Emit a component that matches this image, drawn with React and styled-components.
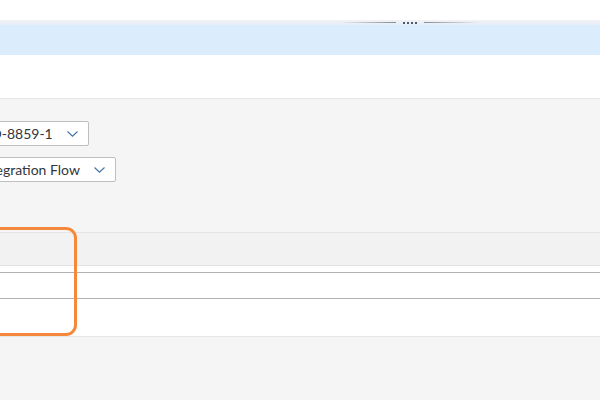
import styled, { createGlobalStyle } from 'styled-components';

const GlobalStyle = createGlobalStyle`
  html, body {
    margin: 0;
    padding: 0;
    width: 600px;
    height: 400px;
    overflow: hidden;
    background: #f7f7f7;
    font-family: Lato, 'Open Sans', sans-serif;
    color: #32363a;
  }
`;

const Page = styled.div`
  width: 600px;
  height: 400px;
  display: flex;
  flex-direction: column;
  overflow: hidden;
`;

const TopSpace = styled.div`
  height: 20px;
  background: #ffffff;
`;

const Splitter = styled.div`
  height: 5px;
  background: linear-gradient(#f3f1f3, #e6eef7);
  display: flex;
  align-items: center;
  justify-content: center;
  gap: 7px;
  padding-left: 220px;
`;

const Grip = styled.div`
  width: 55px;
  height: 1px;
  background: linear-gradient(
    ${(p) => (p.flip ? '90deg' : '270deg')},
    rgba(120, 130, 145, 0.9),
    rgba(200, 210, 220, 0)
  );
`;

const Dots = styled.div`
  display: flex;
  gap: 2px;
`;

const Dot = styled.span`
  width: 2px;
  height: 2px;
  background: #4a5a70;
`;

const InfoBand = styled.div`
  height: 30px;
  background: #dbedfc;
`;

const WhiteArea = styled.div`
  height: 43px;
  background: #ffffff;
  border-bottom: 1px solid #e5e5e5;
`;

const Content = styled.div`
  flex: 1;
  background: #f5f5f5;
  display: flex;
  flex-direction: column;
`;

const Form = styled.div`
  display: flex;
  flex-direction: column;
  gap: 11px;
  margin-left: -30px;
  padding-top: 22px;
`;

const Select = styled.div`
  width: ${(p) => p.width}px;
  height: 25px;
  box-sizing: border-box;
  background: #ffffff;
  border: 1px solid #bfbfbf;
  border-radius: 2px;
  display: flex;
  align-items: center;
  justify-content: space-between;
  padding: 0 10px 0 8px;
  font-size: 14px;
  white-space: nowrap;
`;

const Chevron = () => (
  <svg width="11" height="6" viewBox="0 0 11 6">
    <path d="M0.5 0.5 L5.5 5.2 L10.5 0.5" fill="none" stroke="#3f72a6" strokeWidth="1.1" />
  </svg>
);

const Table = styled.div`
  position: relative;
  margin-top: 50px;
  display: flex;
  flex-direction: column;
`;

const HeaderRow = styled.div`
  height: 32px;
  background: #f2f2f2;
  border-top: 1px solid #e5e5e5;
  border-bottom: 1px solid #e2e2e2;
`;

const Gap = styled.div`
  height: 6px;
  background: #ffffff;
`;

const Row = styled.div`
  height: ${(p) => p.h}px;
  background: #ffffff;
  border-top: 1px solid ${(p) => p.line};
  border-bottom: ${(p) => (p.last ? '1px solid #e5e5e5' : 'none')};
`;

const Highlight = styled.div`
  position: absolute;
  left: -30px;
  top: -5px;
  width: 107px;
  height: 109px;
  box-sizing: border-box;
  border: 3.5px solid #f5883a;
  border-radius: 11px;
`;

export default function App() {
  return (
    <Page>
      <GlobalStyle />
      <TopSpace />
      <Splitter>
        <Grip />
        <Dots>
          <Dot />
          <Dot />
          <Dot />
          <Dot />
        </Dots>
        <Grip flip />
      </Splitter>
      <InfoBand />
      <WhiteArea />
      <Content>
        <Form>
          <Select width={119}>
            <span>ISO-8859-1</span>
            <Chevron />
          </Select>
          <Select width={146}>
            <span>Integration Flow</span>
            <Chevron />
          </Select>
        </Form>
        <Table>
          <HeaderRow />
          <Gap />
          <Row h={25} line="#b0b0b0" />
          <Row h={37} line="#b0b0b0" last />
          <Highlight />
        </Table>
      </Content>
    </Page>
  );
}
